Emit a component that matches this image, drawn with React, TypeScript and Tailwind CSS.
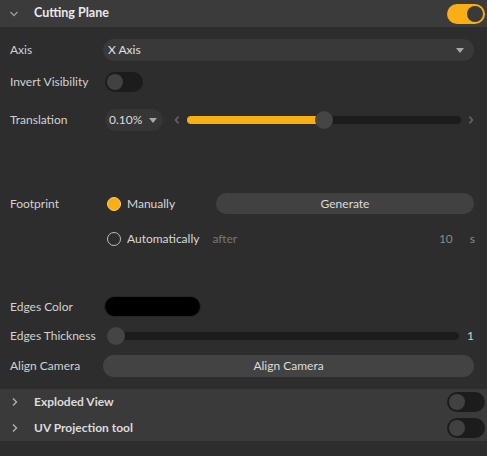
import React, { useState } from "react";

const font = { fontFamily: '"Segoe UI", Lato, "Liberation Sans", sans-serif' };

const Toggle = ({ on }: { on: boolean }) => (
	<div
		className={`w-[38px] h-[20px] rounded-full flex items-center px-[2px] ${
			on ? "bg-[#f9ae13] justify-end" : "bg-[#1c1c1c] justify-start"
		}`}
	>
		<div
			className={`w-[16px] h-[16px] rounded-full ${
				on ? "bg-[#3a3a3a]" : "bg-[#414141]"
			}`}
		></div>
	</div>
);

const Chevron = ({ open }: { open: boolean }) => (
	<svg width="10" height="10" viewBox="0 0 10 10" className="shrink-0">
		{open ? (
			<path d="M1.5 3 L5 6.5 L8.5 3" stroke="#9b9b9b" strokeWidth="1.3" fill="none" />
		) : (
			<path d="M3 1.5 L6.5 5 L3 8.5" stroke="#b5b5b5" strokeWidth="1.3" fill="none" />
		)}
	</svg>
);

// small step arrows beside the slider
const Step = ({ dir }: { dir: "left" | "right" }) => (
	<svg width="6" height="10" viewBox="0 0 6 10" className="shrink-0">
		<path
			d={dir === "left" ? "M4.5 1.5 L1.5 5 L4.5 8.5" : "M1.5 1.5 L4.5 5 L1.5 8.5"}
			stroke="#6f6f6f"
			strokeWidth="1.3"
			fill="none"
		/>
	</svg>
);

const Caret = () => (
	<svg width="8" height="5" viewBox="0 0 8 5">
		<path d="M0 0 L8 0 L4 5 Z" fill="#a8a8a8" />
	</svg>
);

const Row = ({
	label,
	className,
	children,
}: {
	label: string;
	className: string;
	children?: React.ReactNode;
}) => (
	<div className={`flex items-center ${className}`}>
		<div className="w-[93px] shrink-0 text-[12px] text-[#d2d2d2]">{label}</div>
		<div className="flex-1 flex items-center h-full">{children}</div>
	</div>
);

const Section = ({ title }: { title: string }) => (
	<div className="h-[26px] flex items-center pl-[10px] pr-[2px]">
		<Chevron open={false} />
		<span className="ml-[14px] flex-1 text-[12px] font-bold text-[#dcdcdc]">{title}</span>
		<Toggle on={false} />
	</div>
);

export default function App() {
	const [mode] = useState("manual");
	const translation = 50;

	return (
		<div className="w-[487px] min-h-[456px] bg-[#2d2d2d]" style={font}>
			<div className="h-[27px] bg-[#3b3b3b] flex items-center pl-[9px] pr-[2px]">
				<Chevron open={true} />
				<span className="ml-[15px] flex-1 text-[12.5px] font-bold text-[#eaeaea]">
					Cutting Plane
				</span>
				<Toggle on={true} />
			</div>

			<div className="pl-[10px] pr-[13px] pt-[12px] pb-[12px]">
				<Row label="Axis" className="h-[22px]">
					<div className="w-full h-full rounded-full bg-[#393939] flex items-center pl-[5px] pr-[10px] justify-between">
						<span className="text-[12px] text-[#e0e0e0]">X Axis</span>
						<Caret />
					</div>
				</Row>

				<Row label="Invert Visibility" className="h-[20px] mt-[11px]">
					<div className="ml-[2px]">
						<Toggle on={false} />
					</div>
				</Row>

				<Row label="Translation" className="h-[22px] mt-[17px]">
					<div className="ml-[2px] w-[58px] h-full rounded-full bg-[#363636] flex items-center pl-[4px] pr-[6px] justify-between">
						<span className="text-[12px] text-[#dcdcdc]">0.10%</span>
						<Caret />
					</div>
					<div className="ml-[11px]">
						<Step dir="left" />
					</div>
					<div className="relative ml-[7px] flex-1 h-[8px] rounded-full bg-[#1c1c1c]">
						<div
							className="h-full rounded-full bg-[#f9ae13]"
							style={{ width: `${translation}%` }}
						></div>
						<div
							className="absolute top-1/2 -translate-y-1/2 -translate-x-1/2 w-[18px] h-[18px] rounded-full bg-[#454545]"
							style={{ left: `${translation}%` }}
						></div>
					</div>
					<div className="ml-[7px]">
						<Step dir="right" />
					</div>
				</Row>

				<Row label="Footprint" className="h-[21px] mt-[62px]">
					<div className="ml-[4px] w-[14px] h-[14px] rounded-full bg-[#f9ae13] border border-[#ffcf6b]"></div>
					<span className="ml-[6px] w-[89px] text-[12px] text-[#d8d8d8]">Manually</span>
					<div className="flex-1 h-full rounded-full bg-[#414141] flex items-center justify-center text-[12px] text-[#dcdcdc]">
						Generate
					</div>
				</Row>

				<Row label="" className="h-[22px] mt-[14px]">
					<div
						className={`ml-[4px] w-[14px] h-[14px] rounded-full border-[1.5px] ${
							mode === "auto" ? "bg-[#f9ae13]" : "border-[#bdbdbd]"
						}`}
					></div>
					<span className="ml-[6px] text-[12px] text-[#d8d8d8]">Automatically</span>
					<span className="ml-[13px] flex-1 text-[12px] text-[#777777]">after</span>
					<span className="text-[12px] text-[#8a8a8a]">10</span>
					<span className="ml-[17px] mr-[-1px] text-[12px] text-[#8a8a8a]">s</span>
				</Row>

				<Row label="Edges Color" className="h-[21px] mt-[46px]">
					<div className="ml-[1px] w-[97px] h-full rounded-full bg-black border border-[#262626]"></div>
				</Row>

				<Row label="Edges Thickness" className="h-[20px] mt-[9px]">
					<div className="relative ml-[4px] flex-1 h-[8px] rounded-full bg-[#1c1c1c]">
						<div className="absolute top-1/2 -translate-y-1/2 left-0 w-[18px] h-[18px] rounded-full bg-[#454545]"></div>
					</div>
					<span className="ml-[8px] text-[12px] text-[#d0d0d0]">1</span>
				</Row>

				<Row label="Align Camera" className="h-[22px] mt-[9px]">
					<div className="w-full h-full rounded-full bg-[#434343] flex items-center justify-center text-[12px] text-[#dcdcdc]">
						Align Camera
					</div>
				</Row>
			</div>

			<div className="bg-[#3a3a3a]">
				<Section title="Exploded View" />
				<Section title="UV Projection tool" />
			</div>
		</div>
	);
}
